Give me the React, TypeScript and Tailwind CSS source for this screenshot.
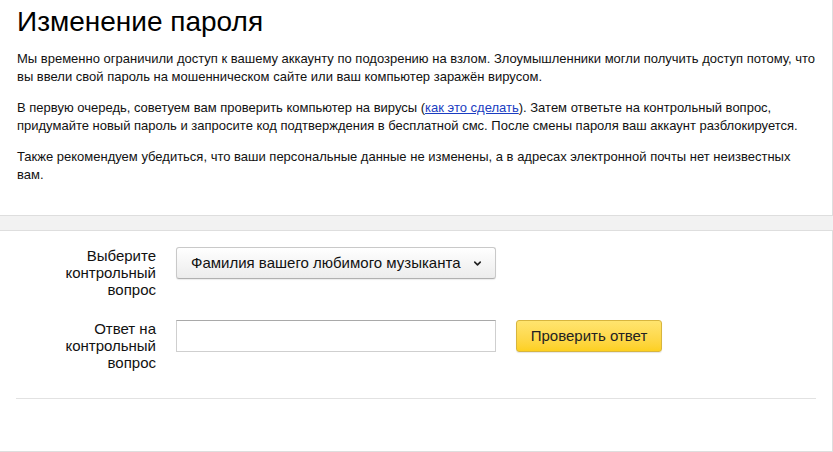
import { ChevronDown } from "lucide-react";

function IntroCard() {
  return (
    <div className="bg-white border-r border-b border-[#dedede] pl-[17px] pr-[16px] pt-[4px] pb-[31px]">
      <h1 className="text-[28px] leading-[35px] text-black font-normal">Изменение пароля</h1>
      <div className="mt-[11px] text-[13px] leading-[18px] text-[#111] space-y-[13px]">
        <p>
          Мы временно ограничили доступ к вашему аккаунту по подозрению на взлом. Злоумышленники могли получить доступ потому, что
          вы ввели свой пароль на мошенническом сайте или ваш компьютер заражён вирусом.
        </p>
        <p>
          В первую очередь, советуем вам проверить компьютер на вирусы (
          <a href="#" className="text-[#1a3dc1] underline">
            как это сделать
          </a>
          ). Затем ответьте на контрольный вопрос, придумайте новый пароль и запросите код подтверждения в бесплатной смс. После
          смены пароля ваш аккаунт разблокируется.
        </p>
        <p>
          Также рекомендуем убедиться, что ваши персональные данные не изменены, а в адресах электронной почты нет неизвестных
          вам.
        </p>
      </div>
    </div>
  );
}

function FormRow({ label, children }: { label: string; children: React.ReactNode }) {
  return (
    <div className="flex items-start">
      <div className="w-[140px] text-right text-[15px] leading-[17px] text-[#111]">{label}</div>
      <div className="ml-[20px] flex items-start">{children}</div>
    </div>
  );
}

function QuestionCard() {
  return (
    <div className="bg-white border-t border-r border-b border-[#dedede] h-[222px] pt-[16px]">
      <div className="pl-[16px] flex flex-col gap-[22px]">
        <FormRow label="Выберите контрольный вопрос">
          <button className="w-[320px] h-[32px] rounded-[3px] border border-[#c9c9c9] border-b-[#b0b0b0] bg-gradient-to-b from-white to-[#ececec] shadow-[0_1px_1px_rgba(0,0,0,0.08)] flex items-center justify-between pl-[14px] pr-[12px] text-[15px] text-[#111]">
            <span>Фамилия вашего любимого музыканта</span>
            <ChevronDown className="w-[11px] h-[11px] text-[#222]" strokeWidth={3.5} />
          </button>
        </FormRow>
        <FormRow label="Ответ на контрольный вопрос">
          <input
            type="text"
            className="w-[320px] h-[32px] border border-[#cfcfcf] border-t-[#a9a9a9] bg-white outline-none px-2 text-[15px]"
          />
          <button className="ml-[20px] w-[146px] h-[32px] rounded-[3px] border border-[#d7b53e] bg-gradient-to-b from-[#ffe46e] to-[#fdd01f] text-[15px] text-[#222] shadow-[0_1px_1px_rgba(0,0,0,0.1)]">
            Проверить ответ
          </button>
        </FormRow>
      </div>
      <div className="mx-[16px] mt-[27px] border-t border-[#e2e2e2]" />
    </div>
  );
}

export default function App() {
  return (
    <div className="w-[833px] h-[452px] bg-[#f2f2f2] overflow-hidden font-['Liberation_Sans',Arial,sans-serif]">
      <IntroCard />
      <div className="h-[14px]" />
      <QuestionCard />
    </div>
  );
}
